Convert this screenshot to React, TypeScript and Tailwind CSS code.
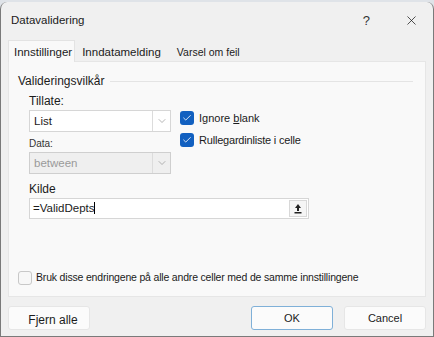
import { Check, ChevronDown, X } from "lucide-react";

function Combo({ value, disabled }: { value: string; disabled?: boolean }) {
  return (
    <div
      className={`flex h-[22px] w-[142px] items-stretch border ${
        disabled ? "border-[#cfcfcf] bg-[#efefef]" : "border-[#d6d6d6] bg-white"
      }`}
    >
      <span className={`flex-1 pl-[4px] text-[11.5px] leading-[20px] ${disabled ? "text-[#9a9a9a]" : "text-[#1b1b1b]"}`}>
        {value}
      </span>
      <span className="flex w-[18px] items-center justify-center border-l border-[#dcdcdc]">
        <ChevronDown size={12} strokeWidth={1.25} color="#8a8a8a" />
      </span>
    </div>
  );
}

function CheckBox({ checked }: { checked?: boolean }) {
  return checked ? (
    <span className="flex h-[14px] w-[14px] items-center justify-center rounded-[3px] bg-[#1260c0]">
      <Check size={10} strokeWidth={2} color="white" />
    </span>
  ) : (
    <span className="h-[14px] w-[14px] rounded-[3px] border border-[#c8c8c8] bg-[#f7f7f7]" />
  );
}

export default function App() {
  return (
    <div className="h-[337px] w-[434px] overflow-hidden bg-[#dfe3e8] font-['Liberation_Sans',sans-serif] text-[#1b1b1b]">
      <div className="mt-[2px] flex h-[335px] flex-col rounded-t-[7px] border-x border-b border-[#7a7a7a] bg-[#f0f0f0]">
        {/* title bar */}
        <div className="flex h-[37px] items-center pl-[10px]">
          <span className="text-[11.5px]">Datavalidering</span>
          <span className="ml-auto mr-[34px] text-[13px] text-[#333]">?</span>
          <X size={15} strokeWidth={1.2} className="mr-[14px]" />
        </div>

        {/* tabs */}
        <div className="mx-[7px] flex h-[22px] items-end">
          <div className="z-10 -mb-px flex h-[22px] items-center border-x border-t border-[#e3e3e3] bg-[#f9f9f9] pl-[5px] pr-[2px] pt-[3px] text-[11.5px]">
            Innstillinger
          </div>
          <div className="flex h-[20px] items-center px-[7px] pt-[3px] text-[11.5px]">Inndatamelding</div>
          <div className="flex h-[20px] items-center px-[9px] pt-[3px] text-[10.5px]">Varsel om feil</div>
        </div>

        {/* panel */}
        <div className="mx-[7px] flex h-[236px] flex-col border border-[#e6e6e6] bg-[#f9f9f9] px-[9px] pt-[10px]">
          <div className="flex items-center">
            <span className="text-[12px]">Valideringsvilkår</span>
            <span className="ml-[6px] mr-[3px] h-px flex-1 bg-[#e4e4e4]" />
          </div>

          <div className="ml-[11px] mt-[3px] flex">
            <div className="flex flex-col">
              <span className="text-[12px] leading-[17px]">Tillate:</span>
              <div>
                <Combo value="List" />
              </div>
              <span className="mt-[5px] text-[10px] leading-[14px] text-[#333]">Data:</span>
              <div className="mt-[1px]">
                <Combo value="between" disabled />
              </div>
            </div>
            <div className="ml-[9px] mt-[18px] flex flex-col gap-[8px]">
              <div className="flex h-[14px] items-center gap-[5px] text-[11px]">
                <CheckBox checked />
                <span>
                  Ignore <span className="underline">b</span>lank
                </span>
              </div>
              <div className="flex h-[14px] items-center gap-[5px] text-[11px] tracking-[-0.2px]">
                <CheckBox checked />
                <span>Rullegardinliste i celle</span>
              </div>
            </div>
          </div>

          <div className="ml-[11px] mt-[7px] flex flex-col">
            <span className="text-[12px] leading-[17px]">Kilde</span>
            <div className="flex h-[21px] w-[280px] items-stretch border border-[#d6d6d6] bg-white">
              <span className="flex-1 pl-[3px] text-[11.5px] leading-[19px]">
                =ValidDepts<span className="border-l border-black" />
              </span>
              <span className="m-px flex w-[18px] items-center justify-center border border-[#d8d8d8] bg-[#f5f5f5]">
                <svg width="8" height="11" viewBox="0 0 8 11">
                  <path d="M4 1 L7 5 L5 5 L5 8 L3 8 L3 5 L1 5 Z" fill="#222" />
                  <rect x="0.5" y="9" width="7" height="1.5" fill="#222" />
                </svg>
              </span>
            </div>
          </div>

          <div className="mt-[51px] flex items-center gap-[4px]">
            <CheckBox />
            <span className="text-[10.5px] tracking-[-0.18px]">
              Bruk disse endringene på alle andre celler med de samme innstillingene
            </span>
          </div>
        </div>

        {/* buttons */}
        <div className="mt-[9px] flex px-[7px]">
          <button className="h-[24px] w-[82px] rounded-[3px] border border-[#e6e6e6] bg-[#fbfbfb] pl-[8px] pt-[4px] text-[12px]">
            Fjern alle
          </button>
          <button className="ml-auto h-[24px] w-[82px] rounded-[3px] border border-[#7fb0d8] bg-[#fbfbfb] text-[11px]">
            OK
          </button>
          <button className="ml-[11px] h-[24px] w-[82px] rounded-[3px] border border-[#e6e6e6] bg-[#fbfbfb] text-[11px]">
            Cancel
          </button>
        </div>
      </div>
    </div>
  );
}
